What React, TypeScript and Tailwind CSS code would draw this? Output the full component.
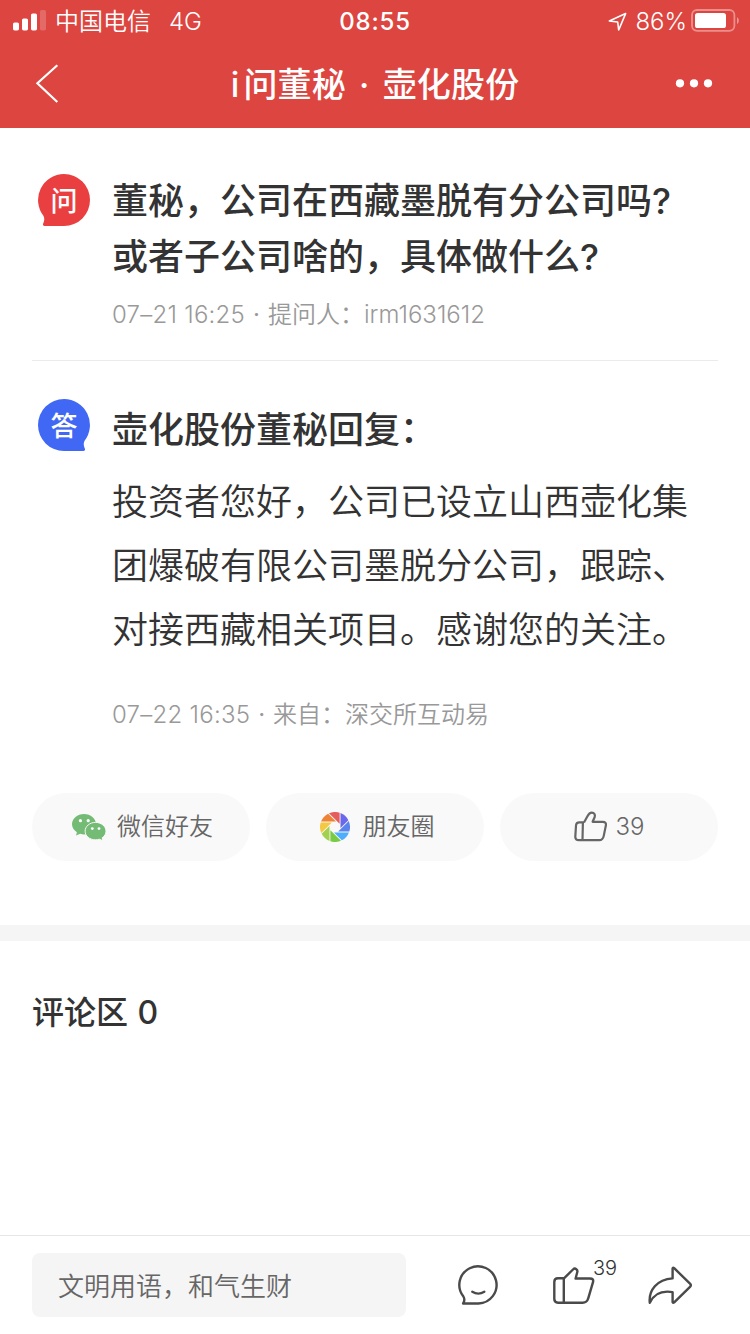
import React from 'react';

const latin = "font-['Inter','Noto_Sans_CJK_SC',sans-serif]";

function SignalBars() {
  return (
    <svg width="34" height="22" viewBox="0 0 34 22" fill="#fff">
      <rect x="0" y="12.4" width="6" height="8" rx="1.6" />
      <rect x="9" y="8.4" width="6" height="12" rx="1.6" />
      <rect x="18" y="3.4" width="6" height="17" rx="1.6" />
      <rect x="27" y="0" width="6" height="20.4" rx="1.6" opacity="0.2" />
    </svg>
  );
}

function LocationArrow() {
  return (
    <svg width="20" height="20" viewBox="0 0 20 20" fill="none" stroke="#fff" strokeWidth="1.6" strokeLinejoin="round">
      <path d="M18.6 2.6 L2.3 10 L10.7 11 L11.7 19 Z" />
    </svg>
  );
}

function Battery() {
  return (
    <svg width="48" height="24" viewBox="0 0 48 24" fill="none">
      <rect x="1" y="1" width="42.4" height="20.8" rx="5" stroke="#fff" strokeOpacity="0.4" strokeWidth="1.8" />
      <rect x="4" y="4" width="31" height="15" rx="2.6" fill="#fff" />
      <path d="M46 8.2 C47.6 9 47.8 10.4 47.8 11.6 C47.8 12.8 47.6 14.2 46 15 Z" fill="#fff" fillOpacity="0.45" />
    </svg>
  );
}

function Header() {
  return (
    <header className="bg-[#dd4540] text-white">
      <div className="grid h-10 grid-cols-3 items-center text-2xl leading-10">
        <div className="flex items-center pl-[13px]">
          <SignalBars />
          <span className="ml-[8px] whitespace-nowrap pt-[2px] font-[350]">中国电信</span>
          <span className="ml-[18px] pt-px text-[24px] font-light tracking-[-0.2px]">4G</span>
        </div>
        <div className="pt-px text-center text-[24px] font-medium tracking-[0.8px]">08:55</div>
        <div className="flex items-center justify-end pr-[11px]">
          <LocationArrow />
          <span className="ml-[8px] mr-[4px] pt-px text-[24px] font-light">86%</span>
          <Battery />
        </div>
      </div>
      <div className="flex h-22 items-center justify-between pl-[34px] pr-[37px]">
        <svg width="28" height="44" viewBox="0 0 28 44" fill="none" stroke="#fff" strokeWidth="2.2" strokeLinecap="square">
          <path d="M22.5 4 L3.4 21.2 L22.5 39.3" />
        </svg>
        <h1 className="ml-[13px] mt-px whitespace-nowrap text-[34px] font-medium tracking-[0.15px] [word-spacing:4px]">
          <span className="mr-[4px]">i</span>问董秘 · 壶化股份
        </h1>
        <svg width="38" height="10" viewBox="0 0 38 10" fill="#fff">
          <circle cx="5" cy="4.3" r="4.1" />
          <circle cx="19" cy="4.3" r="4.1" />
          <circle cx="33" cy="4.3" r="4.1" />
        </svg>
      </div>
    </header>
  );
}

function Badge({ label, answer = false }: { label: string; answer?: boolean }) {
  return (
    <div className="relative size-[52px] shrink-0 text-white">
      <svg className="absolute inset-0" width="52" height="52" viewBox="0 0 52 52">
        <path
          fill={answer ? '#4168f5' : '#ea3f41'}
          transform={answer ? 'translate(52 0) scale(-1 1)' : undefined}
          d="M26 0 A26 26 0 0 1 26 52 H6.6 C5 52 4.6 50.8 5.2 49.4 C6.6 46.6 6.6 44 5.4 41.8 A26 26 0 0 1 26 0 Z"
        />
      </svg>
      <span className="relative flex h-[52px] items-center justify-center pt-[2px] text-[27px] font-medium leading-none">{label}</span>
    </div>
  );
}

function Meta({ time, children }: { time: string; children: React.ReactNode }) {
  return (
    <p className="flex text-2xl leading-8 text-[#999]">
      <span className="font-light tracking-[0.25px]">{time}</span>
      <span className="ml-[8px] mr-[8px] font-normal">·</span>
      <span className="font-[350]">{children}</span>
    </p>
  );
}

function WechatIcon() {
  return (
    <svg width="34" height="27" viewBox="0 0 34 27">
      <path fill="#74bb75" d="M12 0 C18.6 0 24 4.5 24 10.3 C24 16 18.6 20.4 12 20.4 C10.6 20.4 9.4 20.2 8.2 19.8 L4 21.6 L4.9 18.2 C1.9 16.3 0 13.5 0 10.3 C0 4.5 5.4 0 12 0 Z" />
      <circle cx="8.4" cy="6.7" r="1.6" fill="#fff" />
      <circle cx="16.2" cy="6.7" r="1.6" fill="#fff" />
      <path fill="#74bb75" stroke="#f9f9f9" strokeWidth="1" d="M23.5 8.4 C29.3 8.4 34 12.3 34 17.2 C34 19.9 32.6 22.2 30.2 23.8 L31 26.8 L27.4 25.2 C26.2 25.6 24.9 25.8 23.5 25.8 C17.7 25.8 13.1 22 13.1 17.2 C13.1 12.3 17.7 8.4 23.5 8.4 Z" />
      <circle cx="20.3" cy="14.6" r="1.4" fill="#fff" />
      <circle cx="27" cy="14.6" r="1.4" fill="#fff" />
    </svg>
  );
}

const BLADES = ['#e45c5c', '#6a67ea', '#5b83ee', '#4eaefb', '#78cb42', '#a3d04e', '#f5c843', '#ee8336'];

function MomentsIcon() {
  return (
    <svg width="30" height="30" viewBox="-15 -15 30 30">
      {BLADES.map((color, i) => (
        <path key={color} fill={color} transform={`rotate(${i * 45})`} d="M-6 -13.75 A15 15 0 0 1 4.6 -14.28 V-3.15 Z" />
      ))}
    </svg>
  );
}

function SmallThumb() {
  return (
    <svg width="34" height="32" viewBox="0 0 34 32" fill="none" stroke="#666" strokeWidth="2.2" strokeLinejoin="round">
      <path d="M10 11.5 L13.3 5.4 C14.6 3 15.8 1.6 17.8 1.6 C20.4 1.6 21.4 3.8 20.7 6 L18.6 10.8 H28.8 C31.2 10.8 32.3 12.2 31.9 14.2 L29.8 24.6 C29.2 27.8 28.1 29.2 25.2 29.2 H4.8 C2.6 29.2 1.3 28 1.3 25.9 L2 14.5 C2.1 12.4 3.4 11.3 5.4 11.3 H10 M8.9 11.5 L8.5 29" />
    </svg>
  );
}

function Pill({ children }: { children: React.ReactNode }) {
  return (
    <button className="flex h-17 flex-1 items-center justify-center rounded-full bg-[#f9f9f9] text-2xl font-[350] text-[#666]">
      {children}
    </button>
  );
}

function BottomBar() {
  return (
    <footer className="flex h-[99px] items-start border-t border-[#e6e6e6] pl-8 pt-[17px]">
      <div className="flex h-16 w-[374px] items-center rounded-lg bg-[#f5f5f5] pl-[26px] pt-[2px] text-[26px] font-[350] text-[#666]">
        文明用语，和气生财
      </div>
      <svg className="ml-[52px] mt-[12px]" width="40" height="40" viewBox="0 0 40 40" fill="none" stroke="#4a4a4a" strokeWidth="2.4" strokeLinecap="round" strokeLinejoin="round">
        <path d="M20 38 H4.6 C6.4 35.2 6.2 33.2 4.9 31 A18.6 18.6 0 1 1 20 38 Z" transform="translate(.5 .5)" />
        <path d="M14 26.4 Q20 30.2 26 26.4" transform="translate(.3 .3)" />
      </svg>
      <div className="relative ml-[55px] mt-[13px]">
        <svg width="42" height="38" viewBox="0 0 42 38" fill="none" stroke="#4a4a4a" strokeWidth="2.4" strokeLinejoin="round">
          <path transform="translate(0 .5)" d="M11 11.8 L20 3 C21 2 22.3 1.9 23.3 2.7 C24.4 3.5 24.6 4.4 24.3 5.5 L22.6 12 H37 C39.6 12 40.7 13.2 40 15.6 L35.3 31.6 C34.2 35.2 33 36.2 29.6 36.2 H5 C2.5 36.2 1.3 35 1.3 32.6 V15.4 C1.3 12.9 2.5 11.8 5 11.8 Z M10.8 11.8 V36" />
        </svg>
        <span className="absolute left-[40px] top-[-12px] text-[20px] font-light leading-7 text-[#333]">39</span>
      </div>
      <svg className="ml-[53px] mt-[12px]" width="44" height="40" viewBox="0 0 44 40" fill="none" stroke="#4a4a4a" strokeWidth="2.4" strokeLinejoin="round">
        <path d="M24.6 2.6 Q25 1.5 26.2 2.4 L42 17.8 Q43.6 19.4 42 21 L26.2 36.6 Q25 37.6 24.6 36.4 V26.3 C14 24.6 6 28 1.8 37 C0.4 24.5 9 13.6 24.6 12.6 Z" transform="translate(0 .8)" />
      </svg>
    </footer>
  );
}

export default function App() {
  return (
    <div lang="zh-CN" className={`flex h-[1334px] w-[750px] flex-col overflow-hidden bg-white text-[#333] ${latin}`}>
      <Header />
      <main className="flex-1">
        <section className="mx-8 flex h-[233px] gap-[22px] border-b border-[#ebebeb] pl-[6px] pt-[46px]">
          <Badge label="问" />
          <div className="whitespace-nowrap">
            <h2 className="-mt-px mb-[14px] text-4xl font-medium leading-[56px]">
              董秘，公司在西藏墨脱有分公司吗?
              <br />
              或者子公司啥的，具体做什么?
            </h2>
            <Meta time="07–21 16:25">
              提问人：<span className="font-light">irm1631612</span>
            </Meta>
          </div>
        </section>
        <section className="mx-8 flex gap-[22px] pl-[6px] pt-[38px]">
          <Badge label="答" answer />
          <div className="whitespace-nowrap">
            <h2 className="pt-px text-4xl font-medium leading-[60px]">壶化股份董秘回复：</h2>
            <p className="mb-[37px] mt-[10px] text-4xl font-[350] leading-[64px]">
              投资者您好，公司已设立山西壶化集
              <br />
              团爆破有限公司墨脱分公司，跟踪、
              <br />
              对接西藏相关项目。感谢您的关注。
            </p>
            <Meta time="07–22 16:35">来自：深交所互动易</Meta>
          </div>
        </section>
        <div className="mx-8 mt-[62px] flex gap-4">
          <Pill>
            <WechatIcon />
            <span className="-mr-[3px] ml-[11px]">微信好友</span>
          </Pill>
          <Pill>
            <MomentsIcon />
            <span className="-mr-[4px] ml-[13px]">朋友圈</span>
          </Pill>
          <Pill>
            <SmallThumb />
            <span className="ml-[8px] font-light">39</span>
          </Pill>
        </div>
        <div className="mt-16 h-4 bg-[#f5f5f5]" />
        <h3 className="pl-8 pt-[48px] text-[32px] font-medium leading-[48px] [word-spacing:1px]">评论区 0</h3>
      </main>
      <BottomBar />
    </div>
  );
}
